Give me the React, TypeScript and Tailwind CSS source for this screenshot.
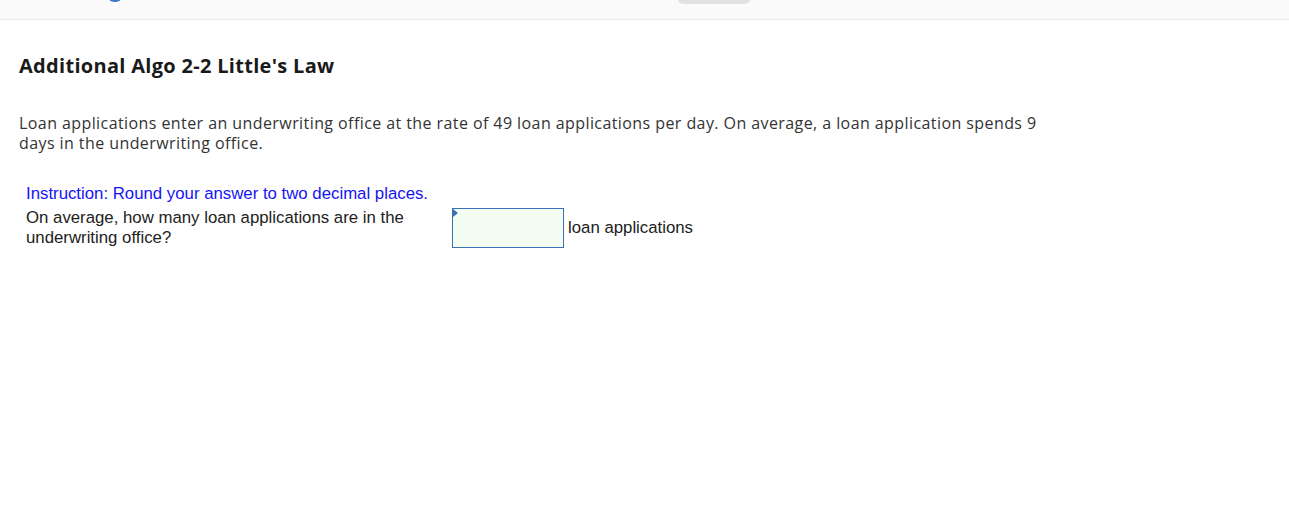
export default function App() {
  return (
    <div className="min-h-[519px] bg-white">
      <div className="relative h-[20px] bg-[#fafafa] border-b border-[#ebebeb]">
        <div className="absolute left-[108px] -top-[10px] w-[14px] h-[12px] rounded-full border-b-[2px] border-[#3b7bd0]" />
        <div className="absolute left-[677px] -top-[10px] w-[74px] h-[14px] rounded-[8px] bg-[#e3e1e4]" />
      </div>
      <div className="px-[19px] pt-[33px]">
        <h1 className="text-[20px] leading-[26px] font-bold text-[#1a1a1a] font-['Open_Sans',sans-serif] tracking-[0.3px]">
          Additional Algo 2-2 Little&apos;s Law
        </h1>
        <p className="mt-[34px] w-[1022px] text-[16px] leading-[20px] text-[#333] font-['Open_Sans',sans-serif] tracking-[0.42px]">
          Loan applications enter an underwriting office at the rate of 49 loan applications per day. On average, a loan application spends 9 days in the underwriting office.
        </p>
        <div className="mt-[31px] pl-[7px] font-['Liberation_Sans',Arial,sans-serif] text-[16.8px] leading-[20px]">
          <div className="text-[#1414f5]">Instruction: Round your answer to two decimal places.</div>
          <div className="mt-[4px] flex items-start">
            <div className="w-[426px] text-[#222]">On average, how many loan applications are in the underwriting office?</div>
            <div className="relative w-[112px] h-[40px] border border-[#3a70b8] bg-[#f3fdf2]">
              <div className="absolute left-0 top-0 w-0 h-0 border-t-[4px] border-b-[4px] border-l-[5px] border-t-transparent border-b-transparent border-l-[#3a70b8]" />
            </div>
            <div className="ml-[4px] mt-[10px] text-[#222]">loan applications</div>
          </div>
        </div>
      </div>
    </div>
  );
}
